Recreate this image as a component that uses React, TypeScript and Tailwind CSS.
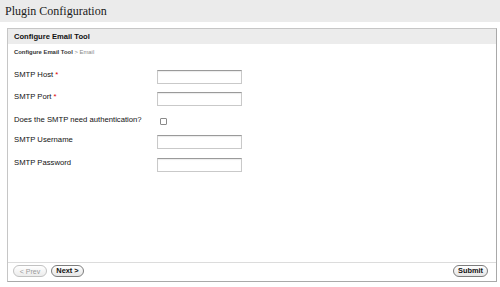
export default function App() {
  const inputCls =
    "w-[85px] h-[14px] bg-white border border-[#c9c9c9] border-t-[#9a9a9a] shadow-[inset_0_1px_1px_rgba(0,0,0,0.08)]"

  return (
    <div className="w-[500px] h-[287px] bg-white font-['Liberation_Sans',Arial,sans-serif] text-[#111] overflow-hidden">
      {/* page title */}
      <div className="h-[22px] bg-[#ebebeb] pl-[5px] flex items-center">
        <h1 className="font-['Liberation_Serif','Times_New_Roman',serif] text-[12px] leading-none text-[#1a1a1a] pb-[1px]">
          Plugin Configuration
        </h1>
      </div>

      {/* panel */}
      <div className="ml-[7px] mt-[6px] w-[490px] h-[254px] border border-[#c6c6c6] border-r-[#a9a9a9] border-b-[#a9a9a9] flex flex-col">
        <div className="h-[15px] bg-[#ececec] pl-[6px] flex items-center">
          <span className="text-[7.6px] font-bold leading-none">Configure Email Tool</span>
        </div>

        <div className="pl-[6px] mt-[4px] text-[5.9px] leading-[8px]">
          <span className="font-bold text-[#333]">Configure Email Tool</span>
          <span className="text-[#888]"> &gt; Email</span>
        </div>

        {/* form */}
        <div className="pl-[6px] mt-[14px] flex flex-col text-[7.7px]">
          <div className="h-[22px] flex items-start">
            <label className="w-[143px] leading-[10px]">
              SMTP Host <span className="text-[#d00]">*</span>
            </label>
            <div className={inputCls} />
          </div>
          <div className="h-[22px] flex items-start">
            <label className="w-[143px] leading-[10px]">
              SMTP Port <span className="text-[#d00]">*</span>
            </label>
            <div className={inputCls} />
          </div>
          <div className="h-[21px] flex items-start">
            <label className="w-[146px] leading-[10px] mt-[1px]">
              Does the SMTP need authentication?
            </label>
            <div className="w-[7px] h-[7px] mt-[4px] bg-white border border-[#8a8a8a] rounded-[1px]" />
          </div>
          <div className="h-[23px] flex items-start">
            <label className="w-[143px] leading-[10px]">SMTP Username</label>
            <div className={inputCls} />
          </div>
          <div className="h-[14px] flex items-start">
            <label className="w-[143px] leading-[10px]">SMTP Password</label>
            <div className={inputCls} />
          </div>
        </div>

        <div className="flex-1" />

        {/* footer */}
        <div className="h-[19px] border-t border-[#dcdcdc] pt-[2px] pl-[5px] pr-[8px] flex items-start">
          <button className="h-[12px] w-[34px] rounded-full border border-[#c2c2c2] bg-gradient-to-b from-white to-[#ececec] text-[#9a9a9a] text-[7px] leading-none flex items-center justify-center">
            &lt; Prev
          </button>
          <button className="ml-[4px] h-[12px] w-[33px] rounded-full border border-[#7d7d7d] bg-gradient-to-b from-white to-[#e6e6e6] text-[#111] text-[7.4px] font-bold leading-none flex items-center justify-center">
            Next &gt;
          </button>
          <div className="flex-1" />
          <button className="h-[12px] w-[35px] rounded-full border border-[#7d7d7d] bg-gradient-to-b from-white to-[#e6e6e6] text-[#111] text-[7.4px] font-bold leading-none flex items-center justify-center">
            Submit
          </button>
        </div>
      </div>
    </div>
  )
}
